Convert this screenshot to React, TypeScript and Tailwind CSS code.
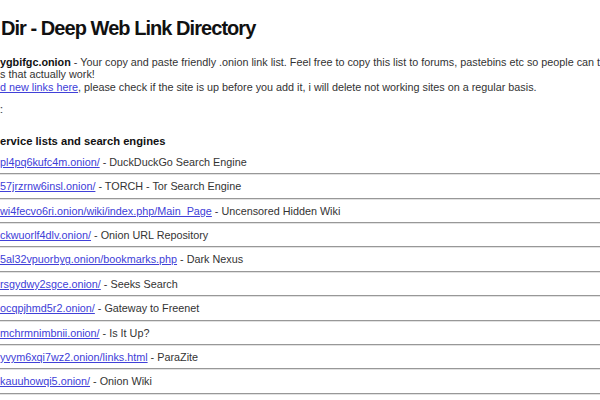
import { FC } from "react";

type Row = { href: string; label: string };

const rows: Row[] = [
  { href: "pl4pq6kufc4m.onion/", label: "DuckDuckGo Search Engine" },
  { href: "57jrzrnw6insl.onion/", label: "TORCH - Tor Search Engine" },
  { href: "wi4fecvo6ri.onion/wiki/index.php/Main_Page", label: "Uncensored Hidden Wiki" },
  { href: "ckwuorlf4dlv.onion/", label: "Onion URL Repository" },
  { href: "5al32vpuorbyg.onion/bookmarks.php", label: "Dark Nexus" },
  { href: "rsgydwy2sgce.onion/", label: "Seeks Search" },
  { href: "ocqpjhmd5r2.onion/", label: "Gateway to Freenet" },
  { href: "mchrmnimbnii.onion/", label: "Is It Up?" },
  { href: "yvym6xqi7wz2.onion/links.html", label: "ParaZite" },
  { href: "kauuhowqi5.onion/", label: "Onion Wiki" },
];

const LinkRow: FC<{ row: Row }> = ({ row }) => (
  <div>
    <div className="flex h-[22.4px] items-center whitespace-nowrap text-[10.8px]">
      <a href="#" className="text-[#4040d8] underline">{row.href}</a>
      <span className="text-[#333]">&nbsp;- {row.label}</span>
    </div>
    <div className="h-[2px] border-t border-b border-t-[#989898] border-b-[#e2e2e2]" />
  </div>
);

export default function App() {
  return (
    <div className="h-[400px] w-[600px] overflow-hidden bg-white font-['Liberation_Sans',Arial,sans-serif] text-[#222]">
      <h1 className="pl-[1px] pt-[16px] text-[20px] font-bold leading-[24px] tracking-[-0.95px] text-[#111] whitespace-nowrap">
        Dir - Deep Web Link Directory
      </h1>

      <div className="mt-[15.8px] text-[10.8px] leading-[12.5px] whitespace-nowrap text-[#333]">
        <div>
          <b className="text-[#111]">ygbifgc.onion</b> - Your copy and paste friendly .onion link list. Feel free to copy this list to forums, pastebins etc so people can t
        </div>
        <div>s that actually work!</div>
        <div>
          <a href="#" className="text-[#4040d8] underline">d new links here</a>, please check if the site is up before you add it, i will delete not working sites on a regular basis.
        </div>
      </div>

      <div className="mt-[9.5px] ml-[-3px] text-[11px] leading-[12.5px] text-[#333]">t:</div>

      <h2 className="mt-[18.7px] text-[11.2px] font-bold leading-[14px] text-[#111] whitespace-nowrap">
        ervice lists and search engines
      </h2>

      <div className="mt-[2.8px]">
        {rows.map((r) => (
          <LinkRow key={r.href} row={r} />
        ))}
      </div>
    </div>
  );
}
